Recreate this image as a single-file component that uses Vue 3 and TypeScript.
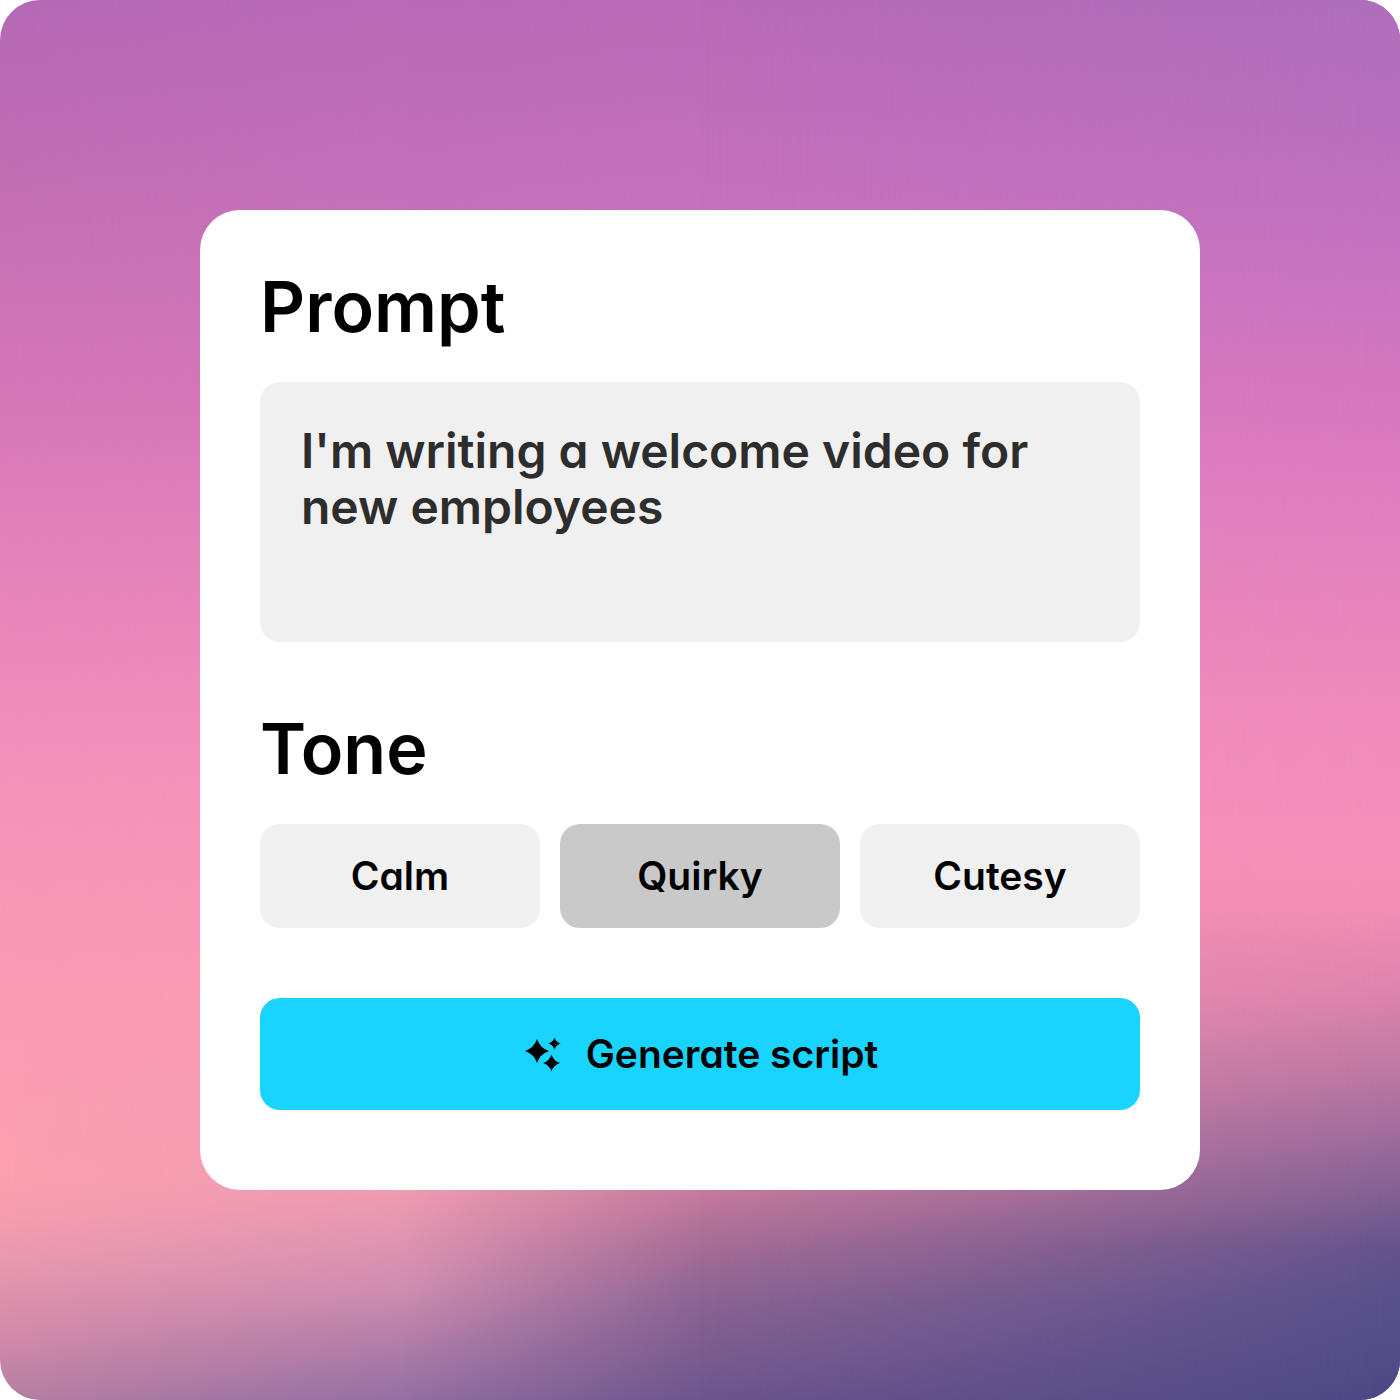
<script setup lang="ts">
import { ref } from 'vue'

const tones = ['Calm', 'Quirky', 'Cutesy'] as const
type Tone = (typeof tones)[number]

const prompt = ref("I'm writing a welcome video for new employees")
const tone = ref<Tone>('Quirky')
</script>

<template>
  <main class="stage">
    <form class="card" @submit.prevent>
      <section class="group">
        <label class="title" for="prompt">Prompt</label>
        <textarea id="prompt" v-model="prompt" class="prompt" spellcheck="false"></textarea>
      </section>

      <section class="group" role="group" aria-labelledby="tone-title">
        <h2 id="tone-title" class="title">Tone</h2>
        <div class="tones">
          <button
            v-for="item in tones"
            :key="item"
            type="button"
            class="tone"
            :class="{ selected: item === tone }"
            :aria-pressed="item === tone"
            @click="tone = item"
          >
            {{ item }}
          </button>
        </div>
      </section>

      <button type="submit" class="generate">
        <svg class="sparkles" viewBox="0 0 40 40" aria-hidden="true">
          <path d="M15 5Q18 14 27 17Q18 20 15 29Q12 20 3 17Q12 14 15 5Z" />
          <path d="M32.5 3.5Q34 8 38.5 9.5Q34 11 32.5 15.5Q31 11 26.5 9.5Q31 8 32.5 3.5Z" />
          <path d="M29.5 20.5Q31.5 27 38 29Q31.5 31 29.5 37.5Q27.5 31 21 29Q27.5 27 29.5 20.5Z" />
        </svg>
        <span>Generate script</span>
      </button>
    </form>
  </main>
</template>

<style>
body {
  margin: 0;
  background: #fff;
}
</style>

<style scoped>
.stage {
  display: flex;
  align-items: center;
  justify-content: center;
  position: relative;
  isolation: isolate;
  overflow: hidden;
  box-sizing: border-box;
  min-height: 100vh;
  padding: 40px;
  border-radius: 40px;
  background: linear-gradient(#b569b5 0%, #c46fb4 14%, #d578b8 29%, #e886bb 43%, #f693b9 57%, #fb9cb5 71%, #fba0b1 84%, #f59eb0 87%, #e596ae 91%, #cf89a8 96%, #b57fa3 100%);
  font-family: Inter, "Liberation Sans", sans-serif;
  font-weight: 600;
  font-feature-settings: "cv11";
  color: #000;
}

/* The backdrop blends vertical ramps from the left edge to the right edge. */
.stage::before,
.stage::after,
.card::before {
  content: "";
  position: absolute;
  inset: 0;
  z-index: -1;
}

.stage::before {
  background: linear-gradient(#b86bb6 0%, #c470b9 14%, #d578b8 29%, #e886bb 43%, #f693b9 57%, #fb9cb5 73%, #ef9bb1 85%, #cf8db0 92%, #b07da8 96%, #936fa3 100%);
  mask-image: linear-gradient(to right, transparent 0%, #000 29%);
}

.card::before {
  background: linear-gradient(#b86bb6 0%, #c571bc 14%, #d277bf 22%, #dd7cbf 31%, #e886bb 43%, #f48fb8 57%, #ee90b2 73%, #c67a9d 85%, #a66d96 89%, #8a6393 93%, #6c558c 100%);
  mask-image: linear-gradient(to right, transparent 29%, #000 50%);
}

.stage::after {
  background: linear-gradient(#ae6ebb 0%, #be70be 14%, #ca74bf 21%, #d979bf 31%, #e583be 41%, #ee89bb 49%, #f590b8 61%, #f28db4 65%, #dc83aa 71%, #c57ba4 75%, #ad719f 79%, #98699a 82%, #7c5e91 86%, #65538c 89%, #57508a 93%, #4c4884 100%);
  mask-image: linear-gradient(to right, transparent 50%, #000 100%);
}

.card {
  display: flex;
  flex-direction: column;
  gap: 70px;
  box-sizing: border-box;
  width: 100%;
  max-width: 1000px;
  padding: 60px 60px 80px;
  border-radius: 40px;
  background: #fff;
}

.group {
  display: flex;
  flex-direction: column;
  gap: 38px;
}

.title {
  margin: 0;
  font-size: 70px;
  font-weight: 600;
  line-height: 74px;
}

.prompt,
.tone,
.generate {
  box-sizing: border-box;
  border: 0;
  border-radius: 20px;
  font: inherit;
  font-feature-settings: inherit;
}

.prompt {
  display: block;
  width: 100%;
  height: 260px;
  padding: 41px;
  resize: none;
  outline: none;
  overflow: hidden;
  background: #f0f0f0;
  color: #2d2d2d;
  font-size: 48px;
  line-height: 56px;
}

.tones {
  display: grid;
  grid-template-columns: repeat(3, 1fr);
  gap: 20px;
}

.tone {
  height: 104px;
  padding: 0 20px;
  background: #f0f0f0;
  color: #000;
  font-size: 39px;
  line-height: 48px;
  cursor: pointer;
}

.tone.selected {
  background: #c9c9c9;
}

.generate {
  display: flex;
  align-items: center;
  justify-content: center;
  gap: 24px;
  height: 112px;
  padding: 0 20px;
  background: #19d4ff;
  color: #000;
  font-size: 39px;
  line-height: 48px;
  cursor: pointer;
}

.sparkles {
  flex: none;
  width: 40px;
  height: 40px;
  fill: currentColor;
}
</style>
